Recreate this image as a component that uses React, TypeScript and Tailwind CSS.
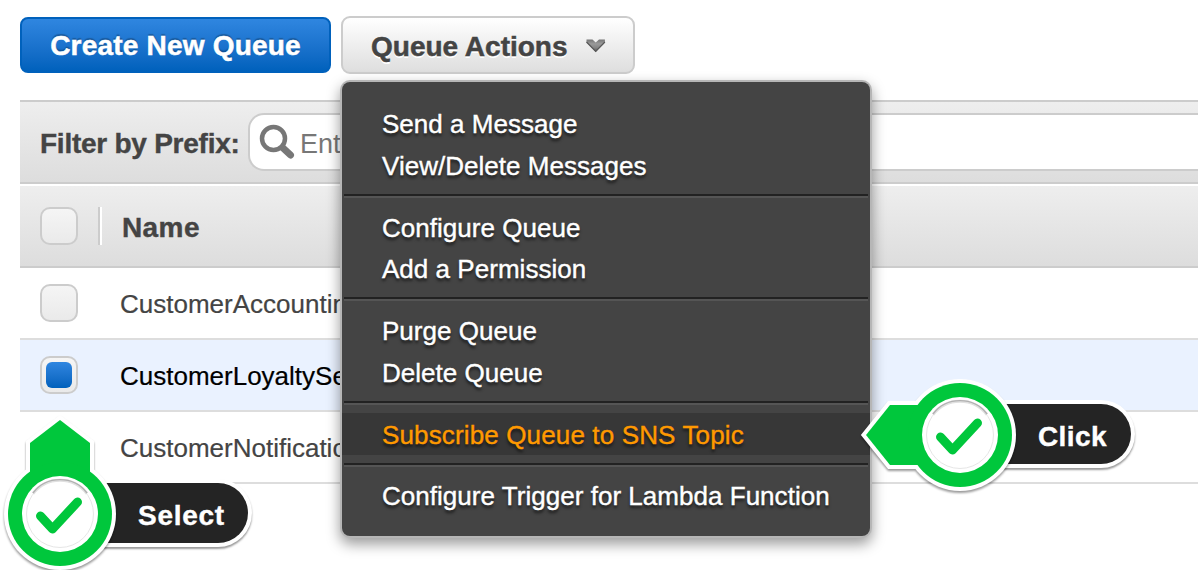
import React from 'react';

const FONT = "font-['Liberation_Sans',Arial,sans-serif]";

function Checkbox({ checked = false }: { checked?: boolean }) {
  return (
    <span className="flex h-[38px] w-[38px] shrink-0 items-center justify-center rounded-[10px] border-2 border-[#cccccc] bg-gradient-to-b from-[#f5f5f5] to-[#eaeaea]">
      {checked && <span className="h-[26px] w-[26px] rounded-[6px] bg-gradient-to-b from-[#2f86e0] to-[#0061bc]" />}
    </span>
  );
}

function Row({ name, selected = false, hidden = false }: { name: string; selected?: boolean; hidden?: boolean }) {
  return (
    <div
      className={
        selected
          ? 'flex h-[72px] items-center border-b-2 border-[#dddddd] bg-[#eaf2ff] pl-5 text-black'
          : 'flex h-[72px] items-center border-b-2 border-[#dddddd] bg-white pl-5 text-[#444444]'
      }
    >
      <span className={hidden ? 'invisible' : ''}>
        <Checkbox checked={selected} />
      </span>
      <span className="ml-[42px] w-[224px] overflow-hidden pt-[2px] text-[26px] leading-[30px] whitespace-nowrap [-webkit-text-stroke:0.2px_currentColor]">
        {name}
      </span>
    </div>
  );
}

function MenuItem({ label, active = false }: { label: string; active?: boolean }) {
  return (
    <div
      className={
        active
          ? 'flex h-[41.75px] items-center bg-[#373737] pl-10 tracking-[0.14px] text-[#ff9900]'
          : 'flex h-[41.75px] items-center pl-10 tracking-[0.03px] text-white'
      }
    >
      <span className="pt-[2px] text-[26px] leading-[30px] whitespace-nowrap [-webkit-text-stroke:0.4px_currentColor] [text-shadow:0_3px_3px_rgba(0,0,0,0.6)]">
        {label}
      </span>
    </div>
  );
}

function Separator() {
  return <div className="mx-[2px] my-2 h-1 border-t-2 border-b-2 border-t-[#222222] border-b-[#555555]" />;
}

function Badge({ direction }: { direction: 'up' | 'left' }) {
  const arrow =
    direction === 'up' ? 'M60 6 L90 29 V70 H30 V29 Z' : 'M-34 100 L-10 70 H30 V130 H-10 Z';
  return (
    <g>
      <g className="[filter:drop-shadow(0_2px_1px_rgba(0,0,0,0.4))]">
        <path d={arrow} fill="#fff" stroke="#fff" strokeWidth="8" />
        <circle cx="60" cy="100" r="56" fill="#fff" />
      </g>
      <path d={arrow} fill="#00c73c" />
      <circle cx="60" cy="100" r="52" fill="#00c73c" />
      <circle cx="60" cy="100" r="38" fill="#fff" />
      <circle cx="60" cy="100" r="33.5" fill="none" stroke="#e6e6e6" strokeWidth="1" />
      <path d="M33 79.500 A34 34 0 0 1 87 79.500" fill="none" stroke="#e0e0e0" strokeWidth="3" />
      <path d="M33 79 A34 34 0 0 1 87 79" fill="none" stroke="#b0b0b0" strokeWidth="1.3" />
      <path d="M40.500 102 L52.500 115 L77.500 88" fill="none" stroke="#00c73c" strokeWidth="9" strokeLinecap="round" strokeLinejoin="round" />
    </g>
  );
}

export default function App() {
  return (
    <div className={`relative h-[570px] w-[1198px] overflow-hidden bg-white ${FONT}`}>
      <div className="flex items-center gap-[10px] pt-4 pl-5">
        <button className="h-[56px] w-[311px] rounded-[8px] border-2 border-[#0061bc] bg-gradient-to-b from-[#2f86e0] to-[#0061bc] pt-px text-[28px] leading-[32px] font-bold tracking-[0.2px] whitespace-nowrap text-white [-webkit-text-stroke:0.5px_currentColor] [text-shadow:0_-2px_1px_rgba(0,0,0,0.25)]">
          Create New Queue
        </button>
        <button className="flex h-[58px] w-[294px] items-center rounded-[9px] border-2 border-[#cccccc] bg-gradient-to-b from-white to-[#dedede] pl-7 text-[28px] leading-[32px] font-bold whitespace-nowrap text-[#444444] [text-shadow:0_2px_0_#ffffff]">
          <span className="w-[197px] pt-[3px] text-left [-webkit-text-stroke:0.5px_currentColor]">Queue Actions</span>
          <svg className="mt-[2px] ml-[18px]" width="20" height="14" viewBox="0 0 20 14">
            <defs>
              <linearGradient id="chevron" x1="0" y1="0" x2="0" y2="1">
                <stop offset="0" stopColor="#757575" />
                <stop offset="0.35" stopColor="#9a9a9a" />
                <stop offset="0.65" stopColor="#858585" />
                <stop offset="1" stopColor="#555555" />
              </linearGradient>
            </defs>
            <path d="M0.500 0.500 H6.500 L9.700 3.500 L13 0.500 H18.900 V3.500 L9.700 13 L0.500 3.500 Z" fill="url(#chevron)" />
            <path d="M0.500 3 L9.700 12.500 L18.900 3" fill="none" stroke="#585858" strokeWidth="1.2" />
          </svg>
        </button>
      </div>

      <div className="mt-[26px] ml-5">
        <div className="flex h-[84px] items-center border-t-2 border-b-2 border-[#cccccc] bg-gradient-to-b from-[#eeeeee] to-[#dddddd] pl-5">
          <span className="w-[208px] pt-[3px] text-[28px] leading-[32px] font-bold tracking-[-0.25px] whitespace-nowrap text-[#444444] [-webkit-text-stroke:0.4px_currentColor]">
            Filter by Prefix:
          </span>
          <div className="flex h-[58px] flex-1 items-center rounded-l-[16px] border-2 border-r-0 border-[#cccccc] bg-white pl-[9px]">
            <svg width="38" height="38" viewBox="0 0 38 38" fill="none">
              <circle cx="14.500" cy="15.500" r="11.500" stroke="#777777" strokeWidth="4.500" />
              <path d="M24 25 L31.500 32" stroke="#777777" strokeWidth="7" strokeLinecap="round" />
            </svg>
            <span className="ml-[3px] w-[42px] overflow-hidden pt-[3px] text-[27px] leading-[32px] whitespace-nowrap text-[#777777]">
              Enter Text
            </span>
          </div>
        </div>
        <div className="mt-[2px] flex h-[82px] items-center border-b-2 border-[#cccccc] bg-gradient-to-b from-[#eeeeee] to-[#dddddd] pl-5">
          <Checkbox />
          <span className="ml-5 h-[38px] w-1 border-r-2 border-l-2 border-l-[#cccccc] border-r-white" />
          <span className="ml-5 pt-[3px] text-[28px] leading-[32px] font-bold tracking-[0.4px] text-[#444444] [-webkit-text-stroke:0.4px_currentColor]">
            Name
          </span>
        </div>
        <Row name="CustomerAccounting" />
        <Row name="CustomerLoyaltyService" selected />
        <Row name="CustomerNotifications" hidden />
      </div>

      <div className="absolute top-[82px] left-[342px] h-[454px] w-[528px] rounded-[8px] bg-[#444444] pt-[20.25px] shadow-[0_0_0_2px_#b6b6b6,0_6px_14px_2px_rgba(0,0,0,0.4)]">
        <MenuItem label="Send a Message" />
        <MenuItem label="View/Delete Messages" />
        <Separator />
        <MenuItem label="Configure Queue" />
        <MenuItem label="Add a Permission" />
        <Separator />
        <MenuItem label="Purge Queue" />
        <MenuItem label="Delete Queue" />
        <Separator />
        <MenuItem label="Subscribe Queue to SNS Topic" active />
        <Separator />
        <MenuItem label="Configure Trigger for Lambda Function" />
      </div>

      <div className="absolute top-[483px] left-[60px] flex h-[60px] w-[188px] items-center rounded-full bg-[#242424] pl-[78px] text-[28px] leading-[32px] font-bold tracking-[0.7px] text-white shadow-[0_0_0_4px_#ffffff,0_2px_2px_4px_rgba(0,0,0,0.4)] [-webkit-text-stroke:0.4px_currentColor]">
        <span className="pt-[6px]">Select</span>
      </div>
      <svg className="absolute top-[414px] left-0 overflow-visible" width="120" height="156" viewBox="0 0 120 156">
        <Badge direction="up" />
      </svg>

      <div className="absolute top-[404px] left-[960px] flex h-[60px] w-[171px] items-center rounded-full bg-[#242424] pl-[78px] text-[28px] leading-[32px] font-bold tracking-[0.4px] text-white shadow-[0_0_0_4px_#ffffff,0_2px_2px_4px_rgba(0,0,0,0.4)] [-webkit-text-stroke:0.4px_currentColor]">
        <span className="pt-[6px]">Click</span>
      </div>
      <svg className="absolute top-[334.500px] left-[900px] overflow-visible" width="120" height="160" viewBox="0 0 120 160">
        <Badge direction="left" />
      </svg>
    </div>
  );
}
